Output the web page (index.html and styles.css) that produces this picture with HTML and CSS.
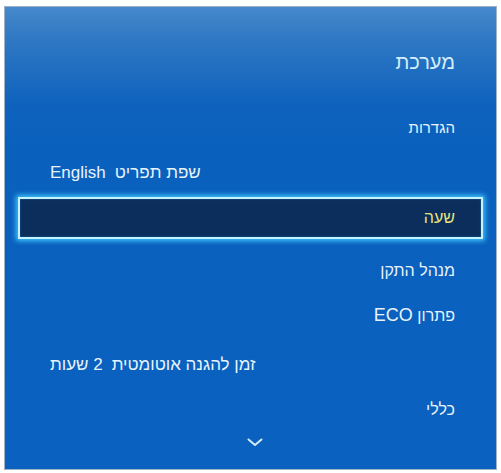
FILE: index.html
```html
<!DOCTYPE html>
<html lang="he" dir="rtl">
<head>
<meta charset="utf-8">
<link rel="stylesheet" href="styles.css">
</head>
<body>
<div class="panel">
  <div class="title">מערכת</div>
  <div class="row row-first">הגדרות</div>
  <div class="row row-left row-big">שפת תפריט<span class="val">English</span></div>
  <div class="sel-wrap"><div class="sel">שעה</div></div>
  <div class="row row-after-sel">מנהל התקן</div>
  <div class="row">פתרון <span class="latin">ECO</span></div>
  <div class="row row-left row-big row-gap">זמן להגנה אוטומטית<span class="val">2 שעות</span></div>
  <div class="row">כללי</div>
  <div class="chev">
    <svg width="16" height="9" viewBox="0 0 16 9"><polyline points="1.5,1.5 8,7 14.5,1.5" fill="none" stroke="#d4ecfa" stroke-width="2" stroke-linecap="round" stroke-linejoin="round"/></svg>
  </div>
</div>
</body>
</html>
```
FILE: styles.css
```css
html, body {
  margin: 0;
  padding: 0;
  background: #ffffff;
}
body {
  padding: 6px 4px 0 4px;
  font-family: "Liberation Sans", Arial, sans-serif;
}
.panel {
  box-sizing: border-box;
  width: 493px;
  height: 464px;
  border: 1px solid #9fb3c6;
  background: linear-gradient(to bottom, #4688cb 0px, #3179c4 30px, #0f63bd 95px, #0a60bd 140px, #0a61bf 100%);
  padding: 0 41px 0 45px;
  direction: rtl;
  color: #e8f3fb;
}
.title {
  margin-top: 37px;
  height: 36px;
  line-height: 36px;
  font-size: 20px;
  color: #d3eefa;
}
.row {
  height: 45px;
  line-height: 45px;
  font-size: 16px;
  text-align: right;
  white-space: nowrap;
}
.row-first {
  margin-top: 25px;
  font-size: 15px;
}
.row-left {
  text-align: left;
}
.row-big {
  font-size: 17px;
}
.latin {
  font-size: 18px;
}
.val {
  margin-right: 9px;
}
.sel-wrap {
  height: 47px;
  margin: 0 -28px 0 -32px;
  padding-top: 2px;
  box-sizing: border-box;
}
.sel {
  height: 42px;
  box-sizing: border-box;
  border: 2px solid #c4f3ff;
  background: #0b2e5c;
  box-shadow: 0 0 5px 2px #3fc6ff, inset 0 0 2px #1b6fb0;
  line-height: 38px;
  font-size: 16px;
  color: #e9e37c;
  padding-right: 26px;
  text-align: right;
}
.row-after-sel {
  margin-top: 6px;
}
.row-gap {
  margin-top: 4px;
}
.chev {
  height: 20px;
  display: flex;
  justify-content: center;
  align-items: center;
  margin-right: -4px;
}
.chev svg {
  display: block;
}
```
